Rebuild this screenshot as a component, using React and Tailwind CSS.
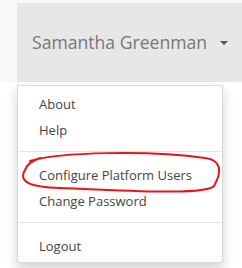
export default function App() {
  const font = { fontFamily: '"Open Sans", "Noto Sans", sans-serif' };
  return (
    <div className="relative h-[268px] w-[242px] overflow-hidden bg-white" style={font}>
      <nav className="flex h-[82px] bg-[#f8f8f8]">
        <div className="w-[17px]" />
        <div className="mt-[3px] flex flex-1 items-center bg-[#e7e7e7] pl-[15px]">
          <span className="whitespace-nowrap text-[17.6px] leading-none text-[#777]">Samantha Greenman</span>
          <span className="ml-[13px] mt-[1px] h-0 w-0 border-x-[4px] border-t-[4px] border-x-transparent border-t-[#555]" />
        </div>
      </nav>

      <div className="absolute left-[17px] top-[85px] w-[206px] rounded-b-[4px] border border-black/15 bg-white pb-[3px] pt-[5px] shadow-[0_6px_12px_rgba(0,0,0,0.175)]">
        <ul className="whitespace-nowrap text-[13px] leading-[26px] text-[#444]">
          <li className="px-[21px]">About</li>
          <li className="px-[21px]">Help</li>
          <li className="mb-[10px] mt-[8px] h-px bg-[#e5e5e5]" />
          <li className="px-[21px]">Configure Platform Users</li>
          <li className="px-[21px]">Change Password</li>
          <li className="mb-[10px] mt-[8px] h-px bg-[#e5e5e5]" />
          <li className="px-[21px]">Logout</li>
        </ul>
      </div>

      <svg className="pointer-events-none absolute left-0 top-0" width="242" height="268" viewBox="0 0 242 268">
        <path
          d="M30 161 C60 152, 150 150, 205 158 C222 160, 222 172, 214 186 C205 196, 120 190, 60 188 C30 187, 18 182, 25 170 C27 165, 30 162, 40 158"
          fill="none"
          stroke="#e8141b"
          strokeWidth="2"
          strokeLinecap="round"
        />
      </svg>
    </div>
  );
}
